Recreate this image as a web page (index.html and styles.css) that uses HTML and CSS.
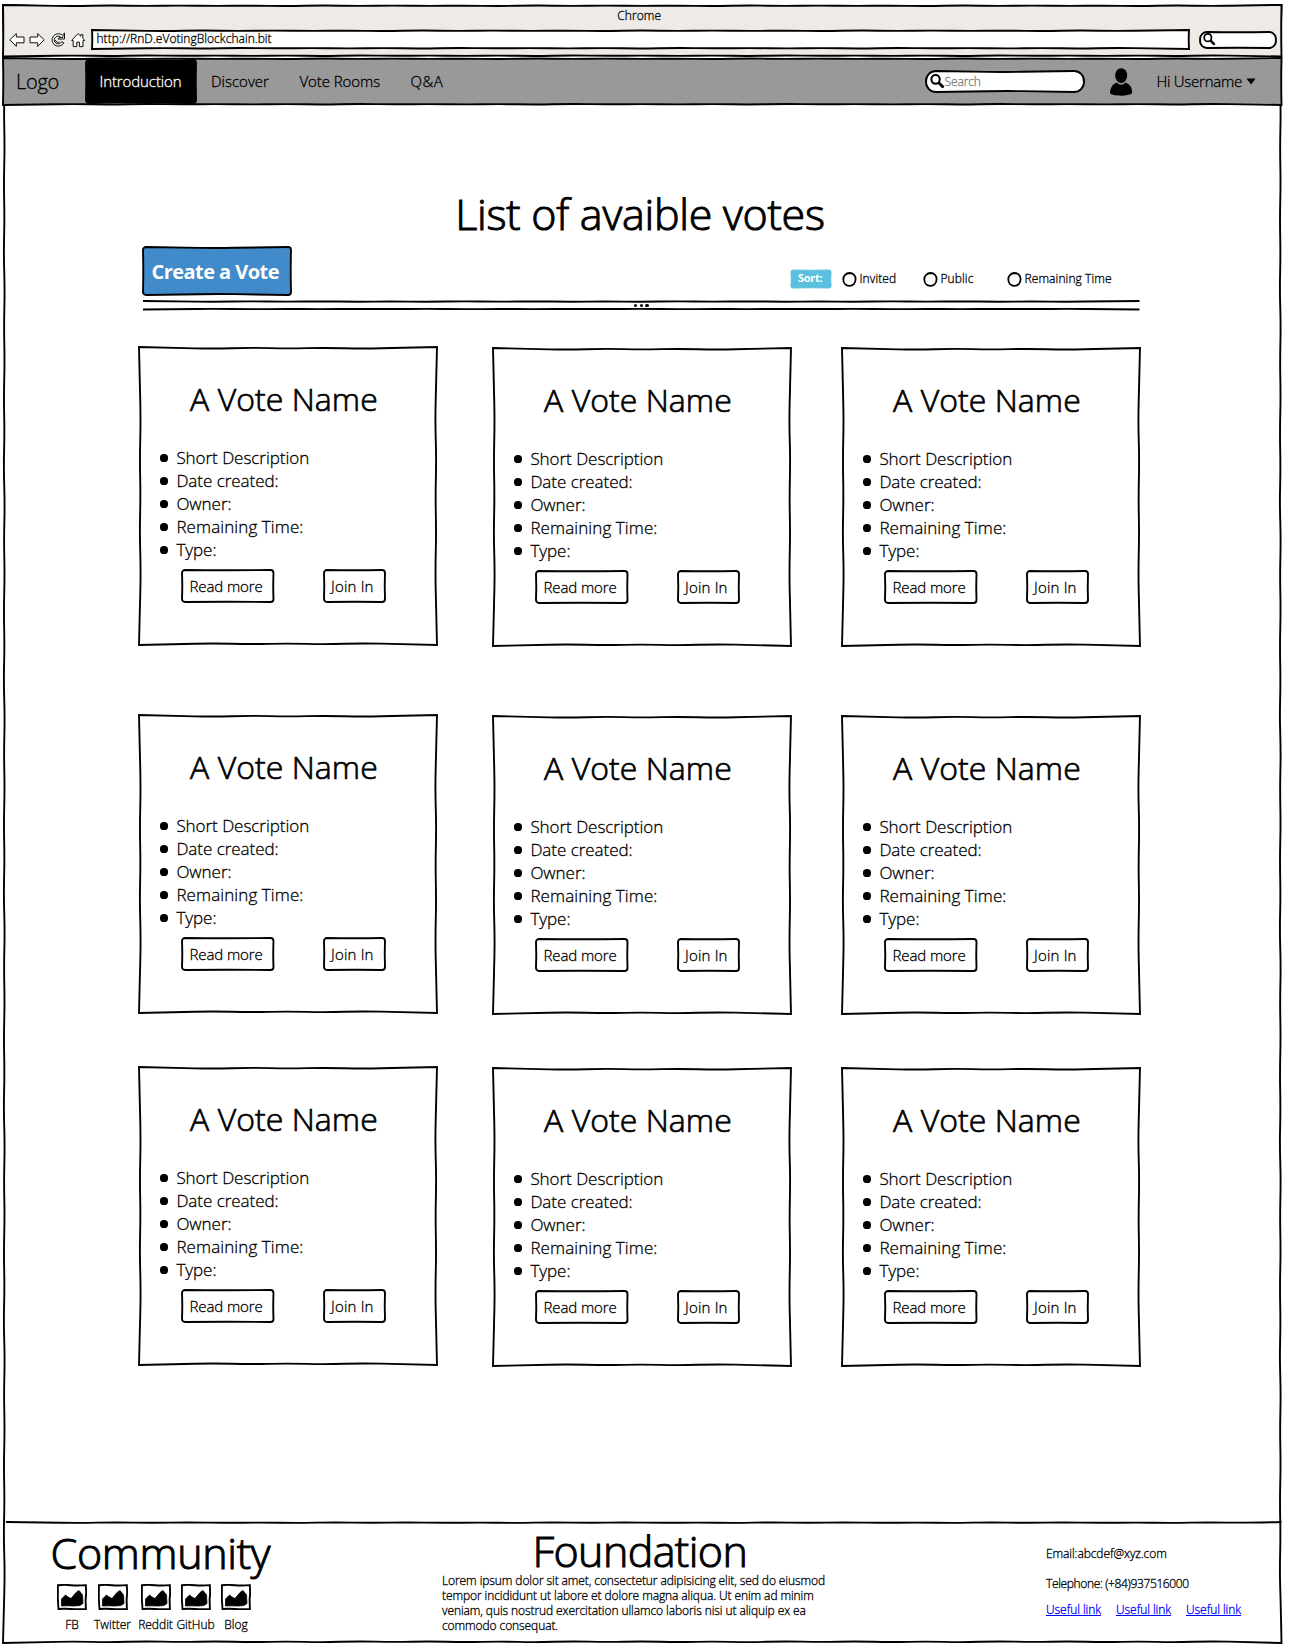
FILE: index.html
```html
<!DOCTYPE html>
<html lang="en">
<head>
<meta charset="utf-8">
<title>List of votes</title>
<link rel="stylesheet" href="styles.css">
</head>
<body>
<svg class="defs" width="0" height="0">
  <symbol id="lens" viewBox="0 0 14 14"><ellipse cx="5.2" cy="5" rx="3.9" ry="4.1" fill="#fff" stroke="#000" stroke-width="1.9"/><path d="M7.6 8.2 9 7.6 12.8 11.2Q13 13.2 11.2 12.8L8 9.4Z" stroke="#000" stroke-width=".8"/></symbol>
  <symbol id="picture" viewBox="0 0 30 26"><path d="M.9 1.2Q7 .6 14 1.2T28.8 1.1L29.2 8 28.6 16 28.9 25Q20 25.4 14 25T1.5 25L.8 14Z" fill="#fff" stroke="#000" stroke-width="1.9"/><path d="M4.5 15 8.5 11 11 13 14 14.5 19 8.5 22 6.5 25.5 11 26 19.5 23 21.5 17 22 10 21.8 4.5 22Z" stroke="#000" stroke-width=".8"/></symbol>
</svg>

<div class="window" data-sketch="0">
  <header class="chrome" data-sketch="0">
    <div class="chrome-title">Chrome</div>
    <div class="toolbar">
      <div class="tools">
        <svg width="16" height="16" viewBox="0 0 16 16"><path d="M.8 7.8 7.3 1.6V5H15v5.8H7.3v3.6Z"/></svg>
        <svg width="16" height="16" viewBox="0 0 16 16"><path d="M15.2 7.8 8.7 1.6V5H1v5.8h7.7v3.6Z"/></svg>
        <svg width="16" height="16" viewBox="0 0 16 16"><path d="M12.3 3.2A6.2 6.2 0 1 0 13.8 10.8L11.6 9.8A3.9 3.9 0 1 1 10.4 4.8L8 7H14.5V1Z"/><path d="M9.6 5.8 12.8 5.6 13.2 2.6M5.5 8A2.5 2.5 0 0 0 9.6 9.8"/></svg>
        <svg width="16" height="16" viewBox="0 0 16 16"><path d="M1.6 8.4 8 1.6 10.8 4.3V2.6H12.8V6.3L14.6 8.4 13 8.6V14.6H9.4V10H6.8V14.6H3.2V8.6Z"/></svg>
      </div>
      <div class="url" data-sketch="0">http://RnD.eVotingBlockchain.bit</div>
      <div class="mini-search" data-sketch="7"><svg width="13" height="13"><use href="#lens"/></svg></div>
    </div>
  </header>

  <nav class="nav" data-sketch="0">
    <div class="logo">Logo</div>
    <a class="tab active" data-sketch="3">Introduction</a>
    <a class="tab discover">Discover</a>
    <a class="tab rooms">Vote Rooms</a>
    <a class="tab qa">Q&amp;A</a>
    <div class="search" data-sketch="10"><svg width="15" height="15"><use href="#lens"/></svg><span>Search</span></div>
    <svg class="user" width="24" height="30" viewBox="0 0 24 30"><ellipse cx="12.2" cy="8.6" rx="6" ry="7.4"/><path d="M7.6 15.6Q12 20 16.8 15.6 21.5 17.5 22.8 22.5 24 26.5 21.5 27.3 15 29.3 11 28.6 5 28.6 1.6 27 .4 26 1.6 22.2 3 17.5 7.6 15.6Z"/></svg>
    <div class="account">Hi Username</div>
    <svg class="caret" width="10" height="7" viewBox="0 0 10 7"><path d="M.4.6 9.6.4 5.2 6.4Z"/></svg>
  </nav>

  <main>
    <h1>List of avaible votes</h1>
    <div class="actions">
      <button class="create" data-sketch="3">Create a Vote</button>
      <div class="sort">
        <span class="badge" data-sketch="2">Sort:</span>
        <label class="invited"><svg width="15" height="15" viewBox="0 0 15 15"><path d="M7.6 1C11.2 1 13.8 3.6 13.6 7.4S11 13.9 7.3 13.8 1.3 10.8 1.3 7.3 4 1.1 7.6 1Z"/></svg>Invited</label>
        <label class="public"><svg width="15" height="15" viewBox="0 0 15 15"><path d="M7.6 1C11.2 1 13.8 3.6 13.6 7.4S11 13.9 7.3 13.8 1.3 10.8 1.3 7.3 4 1.1 7.6 1Z"/></svg>Public</label>
        <label><svg width="15" height="15" viewBox="0 0 15 15"><path d="M7.6 1C11.2 1 13.8 3.6 13.6 7.4S11 13.9 7.3 13.8 1.3 10.8 1.3 7.3 4 1.1 7.6 1Z"/></svg>Remaining Time</label>
      </div>
    </div>
    <div class="splitter" data-sketch="lines"><i></i><i></i><i></i></div>

    <section class="cards">
      <article class="card" data-sketch="0">
        <h2>A Vote Name</h2>
        <ul><li>Short Description</li><li>Date created:</li><li>Owner:</li><li>Remaining Time:</li><li>Type:</li></ul>
        <div class="buttons"><button class="read" data-sketch="3">Read more</button><button class="join" data-sketch="3">Join In</button></div>
      </article>
      <article class="card" data-sketch="0">
        <h2>A Vote Name</h2>
        <ul><li>Short Description</li><li>Date created:</li><li>Owner:</li><li>Remaining Time:</li><li>Type:</li></ul>
        <div class="buttons"><button class="read" data-sketch="3">Read more</button><button class="join" data-sketch="3">Join In</button></div>
      </article>
      <article class="card" data-sketch="0">
        <h2>A Vote Name</h2>
        <ul><li>Short Description</li><li>Date created:</li><li>Owner:</li><li>Remaining Time:</li><li>Type:</li></ul>
        <div class="buttons"><button class="read" data-sketch="3">Read more</button><button class="join" data-sketch="3">Join In</button></div>
      </article>
      <article class="card" data-sketch="0">
        <h2>A Vote Name</h2>
        <ul><li>Short Description</li><li>Date created:</li><li>Owner:</li><li>Remaining Time:</li><li>Type:</li></ul>
        <div class="buttons"><button class="read" data-sketch="3">Read more</button><button class="join" data-sketch="3">Join In</button></div>
      </article>
      <article class="card" data-sketch="0">
        <h2>A Vote Name</h2>
        <ul><li>Short Description</li><li>Date created:</li><li>Owner:</li><li>Remaining Time:</li><li>Type:</li></ul>
        <div class="buttons"><button class="read" data-sketch="3">Read more</button><button class="join" data-sketch="3">Join In</button></div>
      </article>
      <article class="card" data-sketch="0">
        <h2>A Vote Name</h2>
        <ul><li>Short Description</li><li>Date created:</li><li>Owner:</li><li>Remaining Time:</li><li>Type:</li></ul>
        <div class="buttons"><button class="read" data-sketch="3">Read more</button><button class="join" data-sketch="3">Join In</button></div>
      </article>
      <article class="card" data-sketch="0">
        <h2>A Vote Name</h2>
        <ul><li>Short Description</li><li>Date created:</li><li>Owner:</li><li>Remaining Time:</li><li>Type:</li></ul>
        <div class="buttons"><button class="read" data-sketch="3">Read more</button><button class="join" data-sketch="3">Join In</button></div>
      </article>
      <article class="card" data-sketch="0">
        <h2>A Vote Name</h2>
        <ul><li>Short Description</li><li>Date created:</li><li>Owner:</li><li>Remaining Time:</li><li>Type:</li></ul>
        <div class="buttons"><button class="read" data-sketch="3">Read more</button><button class="join" data-sketch="3">Join In</button></div>
      </article>
      <article class="card" data-sketch="0">
        <h2>A Vote Name</h2>
        <ul><li>Short Description</li><li>Date created:</li><li>Owner:</li><li>Remaining Time:</li><li>Type:</li></ul>
        <div class="buttons"><button class="read" data-sketch="3">Read more</button><button class="join" data-sketch="3">Join In</button></div>
      </article>
    </section>
  </main>

  <footer data-sketch="top">
    <section class="community">
      <h3>Community</h3>
      <div class="social">
        <a><svg width="30" height="26"><use href="#picture"/></svg>FB</a>
        <a><svg width="30" height="26"><use href="#picture"/></svg>Twitter</a>
        <a><svg width="30" height="26"><use href="#picture"/></svg>Reddit</a>
        <a><svg width="30" height="26"><use href="#picture"/></svg>GitHub</a>
        <a><svg width="30" height="26"><use href="#picture"/></svg>Blog</a>
      </div>
    </section>
    <section class="foundation">
      <h3>Foundation</h3>
      <p>Lorem ipsum dolor sit amet, consectetur adipisicing elit, sed do eiusmod<br>tempor incididunt ut labore et dolore magna aliqua. Ut enim ad minim<br>veniam, quis nostrud exercitation ullamco laboris nisi ut aliquip ex ea<br>commodo consequat.</p>
    </section>
    <section class="contact">
      <div class="email">Email:abcdef@xyz.com</div>
      <div class="phone">Telephone: (+84)937516000</div>
      <div class="links"><a href="#">Useful link</a><a href="#">Useful link</a><a href="#">Useful link</a></div>
    </section>
  </footer>
</div>
<script src="sketch.js"></script>
</body>
</html>
```
FILE: styles.css
```css
* { box-sizing: border-box; }
body {
  margin: 0;
  padding: 5px 8px 8px 3px;
  background: #fff;
  color: #000;
  font: 300 12px/16px "Open Sans", "Noto Sans", sans-serif;
  white-space: nowrap;
  -webkit-text-stroke: 0.3px;
}
h1, h2, h3, p, ul { margin: 0; padding: 0; font-weight: 300; }
h1, h3 { font-size: 43px; line-height: 50px; -webkit-text-stroke: 1px; }
svg { display: block; flex: none; overflow: visible; }
.defs { position: absolute; }
button { border: 0; padding: 0; background: none; color: inherit; font: inherit; letter-spacing: inherit; text-align: left; }

/* hand-drawn outlines, added by sketch.js behind each box */
[data-sketch] { position: relative; isolation: isolate; }
.outline { position: absolute; left: 0; top: 0; z-index: -1; stroke: #000; stroke-width: 1.9; fill: var(--fill, none); }

.window { width: 1278.5px; height: 1638px; display: flex; flex-direction: column; }

.chrome { --fill: #eeebe6; height: 51.5px; padding-top: 2.5px; }
.chrome-title { padding-right: 6px; text-align: center; letter-spacing: 0.1px; }
.toolbar { display: flex; align-items: center; height: 19px; margin-top: 6.5px; padding-left: 5.5px; }
.tools { display: flex; gap: 4.6px; width: 83.5px; }
.tools svg { fill: #fff; stroke: #111; stroke-width: 1; }
.url { --fill: #fff; width: 1097px; height: 19px; padding-left: 4.5px; line-height: 17px; letter-spacing: 0.04px; }
.mini-search { --fill: #fff; width: 76px; height: 16px; margin-left: 11px; padding: 1.5px 0 0 3px; }

.nav { --fill: #999; display: flex; align-items: center; height: 47px; margin-top: 1.5px; line-height: 47px; font-size: 15px; }
.logo { width: 83px; padding-left: 13px; font-size: 20px; letter-spacing: -0.3px; }
.tab.active { --fill: #000; width: 110px; height: 43px; line-height: 43px; padding-left: 13.5px; color: #fff; letter-spacing: -0.1px; }
.discover { padding-left: 15px; width: 103.5px; }
.rooms { width: 111px; letter-spacing: -0.08px; }
.qa { letter-spacing: 0.5px; }
.search { --fill: #fff; display: flex; align-items: center; width: 158px; height: 21px; margin-left: auto; padding-left: 4px; color: #808080; font-size: 12px; line-height: 19px; letter-spacing: -0.1px; -webkit-text-stroke: 0.3px; }
.user { margin-left: 25px; }
.account { margin-left: 24px; width: 89.5px; letter-spacing: -0.25px; }
.caret { margin-right: 25.5px; }

main { flex: 1; padding: 84px 0 0 136px; }
h1 { width: 1002px; text-align: center; letter-spacing: -0.25px; }
.actions { display: flex; margin: 8px 0 0 4px; }
.create { --fill: #428bca; width: 148px; height: 48px; padding-left: 8.5px; color: #fff; font-size: 20px; font-weight: 700; line-height: 49px; letter-spacing: -0.55px; -webkit-text-stroke: 0; }
.sort { display: flex; align-items: center; height: 18px; margin: 23px 0 0 500px; }
.badge { --fill: #5bc0de; width: 40px; height: 18px; padding-left: 7px; color: #fff; font-weight: 700; font-size: 11px; letter-spacing: -0.3px; -webkit-text-stroke: 0; }
.badge .outline { stroke: #5bc0de; stroke-width: 1; }
.sort label { display: flex; align-items: center; gap: 3px; letter-spacing: 0.1px; }
.sort label svg { fill: #fff; stroke: #000; stroke-width: 1.8; }
.invited { margin-left: 10.5px; width: 81px; }
.public { width: 84px; }
.splitter { display: flex; justify-content: center; align-items: center; gap: 2.4px; width: 996.5px; height: 8.5px; margin: 6px 0 0 4px; }
.splitter i { width: 3.4px; height: 3.4px; border-radius: 50%; background: #000; }

.cards { display: grid; grid-template-columns: 354px 349px 298px; grid-template-rows: 368px 352px 298px; margin-top: 37.5px; }
.card { width: 298px; height: 298px; padding-top: 32px; }
.card:not(:nth-child(3n+1)) { margin-top: 1px; }
h2 { padding-left: 51px; font-size: 32px; line-height: 40px; letter-spacing: 0.05px; -webkit-text-stroke: 0.7px; }
ul { margin-top: 27px; list-style: none; font-size: 17px; line-height: 23px; letter-spacing: -0.04px; }
li:nth-child(4) { letter-spacing: 0.1px; }
li { display: flex; align-items: center; gap: 8px; padding-left: 21px; }
li::before { content: ""; width: 8.4px; height: 8px; border-radius: 45%; background: #000; }
.buttons { display: flex; gap: 50px; margin: 9px 0 0 43px; font-size: 15px; }
.buttons button { height: 32px; padding-left: 7.5px; line-height: 30px; }
.read { width: 91.5px; letter-spacing: -0.1px; }
.join { width: 61px; letter-spacing: 0.2px; }

footer { display: flex; height: 121px; }
.community { width: 439px; padding: 6px 0 0 47.5px; }
.community h3 { letter-spacing: -0.3px; }
.social { display: grid; grid-template-columns: 41px 40px 46px 34px 47px; margin: 6px 0 0 1px; }
.social a { display: flex; flex-direction: column; align-items: center; gap: 7px; }
.foundation { width: 604px; padding-top: 7px; }
.foundation h3 { padding-left: 90.5px; line-height: 44px; letter-spacing: -0.6px; }
.foundation p { line-height: 15px; letter-spacing: -0.09px; }
.contact { padding-top: 24px; }
.email { letter-spacing: -0.08px; }
.phone { margin-top: 13.5px; letter-spacing: -0.36px; }
.links { display: flex; gap: 15px; margin-top: 10px; letter-spacing: -0.06px; }
.links a { color: #00f; width: 55px; }
```
FILE: sketch.js
```js
// Draws a slightly wavy outline around each [data-sketch] box.
// The value is the corner radius, or "lines" / "top" for open strokes.
const NS = 'http://www.w3.org/2000/svg';
const WAVE = [1.3, 0.7, 1.4, 0.5, 1.2, 0.6];

// Wavy run from (x1,y1) to (x2,y2); it bends towards (nx,ny).
function edge(x1, y1, x2, y2, nx, ny, amp) {
  const len = Math.hypot(x2 - x1, y2 - y1);
  const n = Math.max(2, Math.round(len / 36));
  let d = '';
  let prev = null;
  for (let i = 1; i < n; i++) {
    const k = WAVE[i % WAVE.length] * amp;
    const p = [x1 + (x2 - x1) * i / n + nx * k, y1 + (y2 - y1) * i / n + ny * k];
    if (prev) d += `Q${prev} ${(prev[0] + p[0]) / 2},${(prev[1] + p[1]) / 2}`;
    prev = p;
  }
  return d + `Q${prev} ${x2},${y2}`;
}

document.querySelectorAll('[data-sketch]').forEach(el => {
  const { width: w, height: h } = el.getBoundingClientRect();
  const kind = el.dataset.sketch;
  let d;
  if (kind === 'lines') {
    d = `M0,0${edge(0, 0, w, 0, 0, 1, 0.6)}M0,${h}${edge(0, h, w, h, 0, -1, 0.5)}`;
  } else if (kind === 'top') {
    d = `M3,0${edge(3, 0, w, 0, 0, 1, 0.7)}`;
  } else {
    const r = +kind;
    const a = h < 60 ? 0.8 : 1.3;
    const arc = (x, y) => r ? `A${r},${r} 0 0 1 ${x},${y}` : '';
    d = `M${r},0` + edge(r, 0, w - r, 0, 0, 1, a) + arc(w, r) +
      edge(w, r, w, h - r, -1, 0, a) + arc(w - r, h) +
      edge(w - r, h, r, h, 0, -1, a) + arc(0, h - r) +
      edge(0, h - r, 0, r, 1, 0, a) + arc(r, 0) + 'Z';
  }
  const svg = document.createElementNS(NS, 'svg');
  svg.setAttribute('class', 'outline');
  svg.setAttribute('width', w);
  svg.setAttribute('height', h);
  const path = document.createElementNS(NS, 'path');
  path.setAttribute('d', d);
  svg.append(path);
  el.append(svg);
});
```
